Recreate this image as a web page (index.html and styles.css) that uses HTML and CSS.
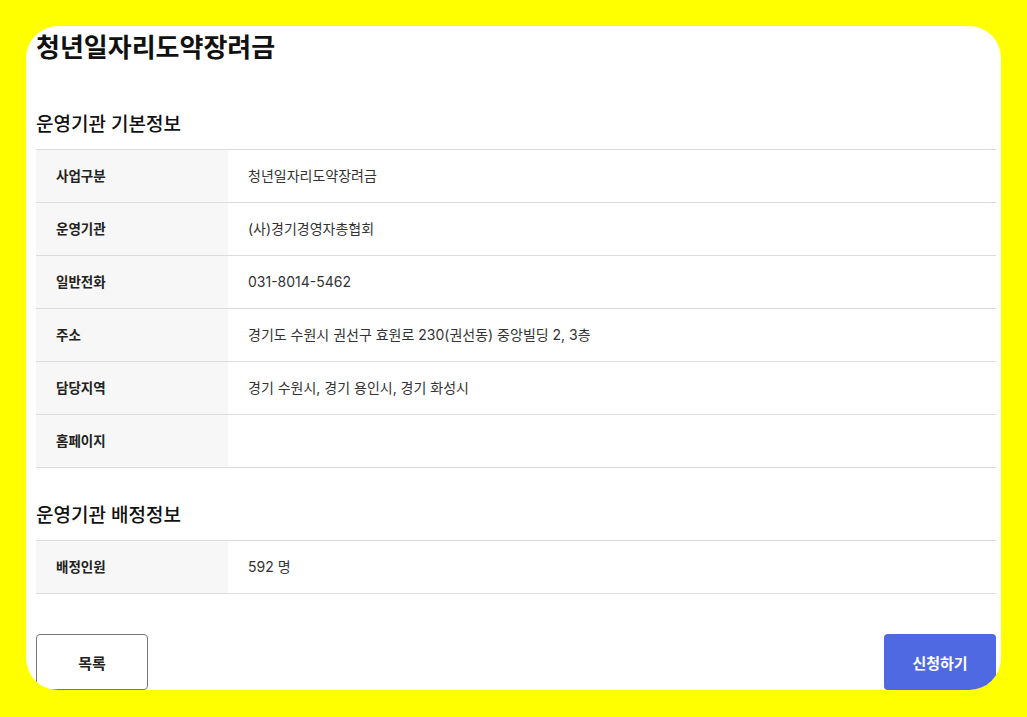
FILE: index.html
```html
<!DOCTYPE html>
<html lang="ko">
<head>
<meta charset="utf-8">
<title>청년일자리도약장려금</title>
<link rel="stylesheet" href="styles.css">
</head>
<body>
<div class="card">
  <h1 class="title">청년일자리도약장려금</h1>

  <h2 class="section-title first">운영기관 기본정보</h2>
  <div class="info-table">
    <div class="row"><div class="label">사업구분</div><div class="value">청년일자리도약장려금</div></div>
    <div class="row"><div class="label">운영기관</div><div class="value">(사)경기경영자총협회</div></div>
    <div class="row"><div class="label">일반전화</div><div class="value">031-8014-5462</div></div>
    <div class="row"><div class="label">주소</div><div class="value">경기도 수원시 권선구 효원로 230(권선동) 중앙빌딩 2, 3층</div></div>
    <div class="row"><div class="label">담당지역</div><div class="value">경기 수원시, 경기 용인시, 경기 화성시</div></div>
    <div class="row"><div class="label">홈페이지</div><div class="value"></div></div>
  </div>

  <h2 class="section-title">운영기관 배정정보</h2>
  <div class="info-table">
    <div class="row"><div class="label">배정인원</div><div class="value">592 명</div></div>
  </div>

  <div class="actions">
    <button class="btn btn-outline">목록</button>
    <button class="btn btn-primary">신청하기</button>
  </div>
</div>
</body>
</html>
```

FILE: styles.css
```css
html, body {
  margin: 0;
  padding: 0;
}
body {
  background: #ffff00;
  font-family: Inter, "Noto Sans CJK KR", sans-serif;
  color: #222;
}
.card {
  margin: 26px;
  height: 664px;
  box-sizing: border-box;
  background: #fff;
  border-radius: 32px;
  overflow: hidden;
  padding: 4px 5px 0 10px;
}
.title {
  margin: 0;
  font-size: 26px;
  line-height: 36px;
  font-weight: 700;
  color: #111;
}
.section-title {
  margin: 35px 0 11px;
  font-size: 19px;
  line-height: 26px;
  font-weight: 500;
  color: #111;
}
.section-title.first {
  margin-top: 46px;
}
.info-table {
  border-top: 1px solid #dcdcdc;
}
.row {
  display: flex;
  height: 53px;
  border-bottom: 1px solid #dcdcdc;
  box-sizing: border-box;
}
.label {
  width: 192px;
  flex: none;
  background: #f7f7f7;
  padding-left: 20px;
  box-sizing: border-box;
  display: flex;
  align-items: center;
  font-size: 13.5px;
  line-height: 18px;
  font-weight: 700;
  color: #222;
}
.value {
  flex: 1;
  padding-left: 20px;
  display: flex;
  align-items: center;
  font-size: 14px;
  line-height: 18px;
  color: #333;
}
.actions {
  display: flex;
  justify-content: space-between;
  margin-top: 40px;
}
.btn {
  width: 112px;
  height: 56px;
  border-radius: 4px;
  font-family: inherit;
  font-size: 15px;
  font-weight: 700;
  cursor: pointer;
}
.btn-outline {
  background: #fff;
  border: 1px solid #777;
  color: #222;
}
.btn-primary {
  background: #4e69e2;
  border: none;
  color: #fff;
}
```
